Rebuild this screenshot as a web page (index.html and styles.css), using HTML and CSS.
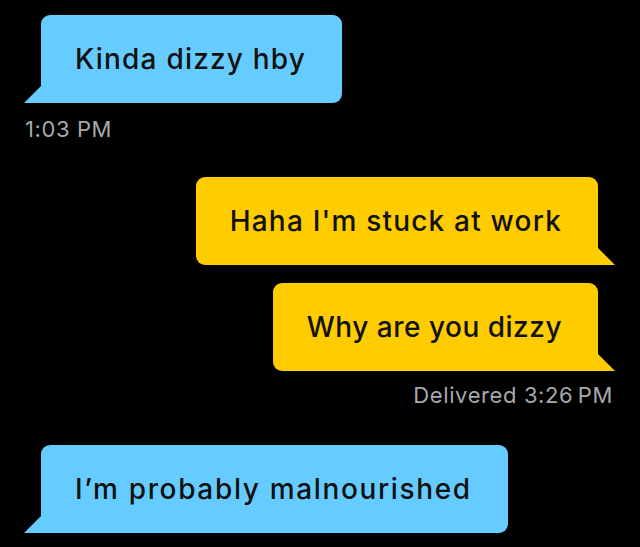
FILE: index.html
```html
<!DOCTYPE html>
<html>
<head>
<meta charset="utf-8">
<link rel="stylesheet" href="styles.css">
</head>
<body>
<div class="chat">
  <div class="row in"><div class="bubble blue b1">Kinda dizzy hby</div></div>
  <div class="meta left m1">1:03 PM</div>
  <div class="row out"><div class="bubble yellow b2">Haha I'm stuck at work</div></div>
  <div class="row out"><div class="bubble yellow b3">Why are you dizzy</div></div>
  <div class="meta right m2">Delivered 3:26&#8201;PM</div>
  <div class="row in"><div class="bubble blue b4">I’m probably malnourished</div></div>
</div>
</body>
</html>
```

FILE: styles.css
```css
html, body {
  margin: 0;
  padding: 0;
  background: #000;
}
body {
  width: 640px;
  height: 547px;
  overflow: hidden;
  font-family: "Inter", "Open Sans", sans-serif;
}
.chat {
  display: flex;
  flex-direction: column;
  padding: 15px 42px 0 41px;
}
.row {
  display: flex;
}
.row.in { justify-content: flex-start; }
.row.out { justify-content: flex-end; }
.bubble {
  position: relative;
  font-size: 28px;
  font-weight: 500;
  letter-spacing: 1.2px;
  line-height: 34px;
  color: #111;
  padding: 27px 36px 27px 34px;
  border-radius: 9px;
  white-space: nowrap;
}
.blue {
  background: #66ccff;
  border-bottom-left-radius: 0;
}
.yellow {
  background: #ffcc00;
  border-bottom-right-radius: 0;
}
.blue::after,
.yellow::after {
  content: "";
  position: absolute;
  bottom: 0;
  width: 17px;
  height: 17px;
}
.blue::after {
  left: -17px;
  background: #66ccff;
  clip-path: polygon(100% 0, 100% 100%, 0 100%);
}
.yellow::after {
  right: -17px;
  background: #ffcc00;
  clip-path: polygon(0 0, 100% 100%, 0 100%);
}
.meta {
  color: #a8a8ad;
  font-size: 22px;
  letter-spacing: 0.6px;
  line-height: 24px;
}
.meta.left { margin-left: -16px; }
.meta.right { align-self: flex-end; margin-right: -15px; }
.m1 { margin-top: 14px; margin-bottom: 36px; }
.b3 { margin-top: 18px; letter-spacing: 0.5px; }
.m2 { margin-top: 12px; }
.b4 { margin-top: 38px; letter-spacing: 1.65px; }
```
